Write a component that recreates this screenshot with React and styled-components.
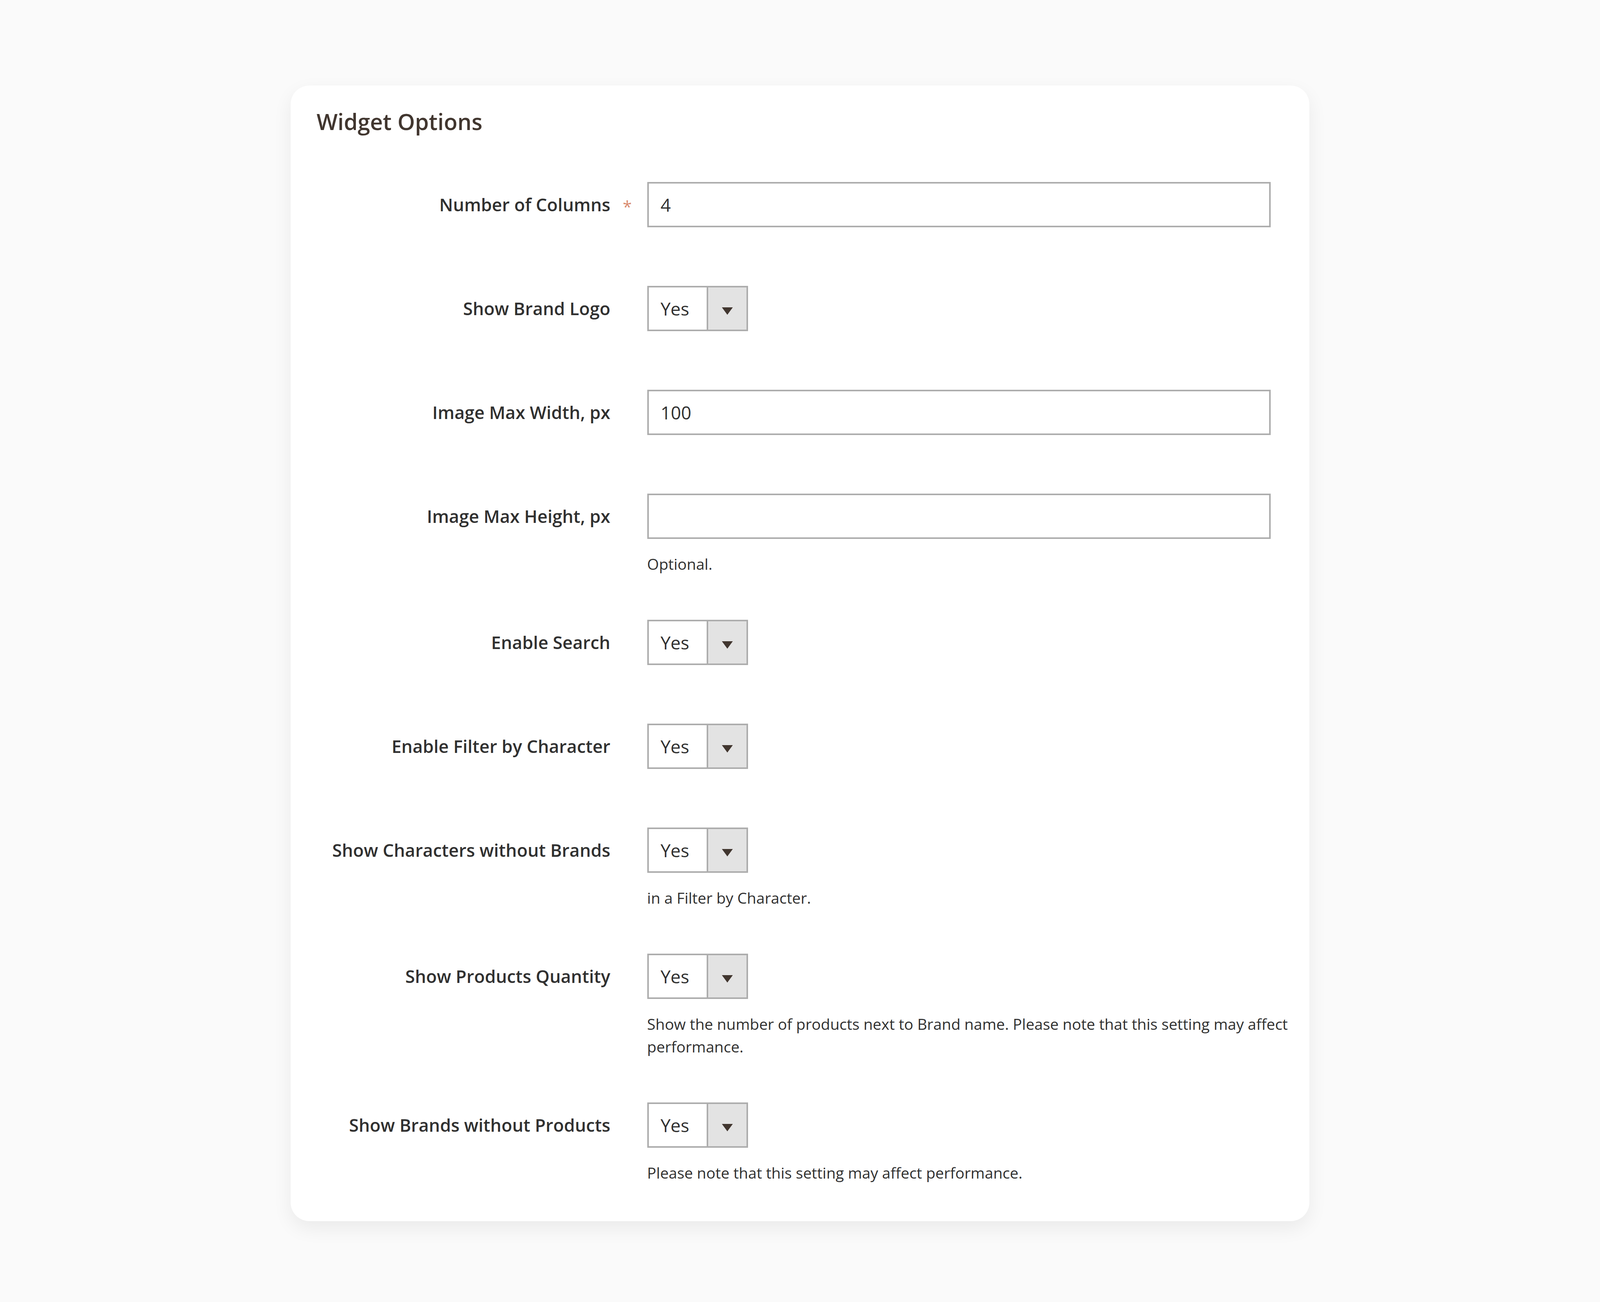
import styled, { createGlobalStyle } from "styled-components";

// horizontal sizes are kept relative to the window width, vertical ones in px
const GlobalStyle = createGlobalStyle`
  html, body {
    margin: 0;
    padding: 0;
    background: #fafafa;
  }
  body {
    font-family: "Open Sans", "Liberation Sans", sans-serif;
    color: #303030;
  }
  * {
    box-sizing: border-box;
  }
`;

const Page = styled("div")`
  min-height: 3334px;
  padding-top: 219px;
`;

const Card = styled("section")`
  width: 63.65vw;
  margin: 0 auto;
  background: #fff;
  border-radius: 48px;
  box-shadow: 0 18px 50px rgba(0, 0, 0, 0.065);
  padding: 57px 2.41vw 95px 1.61vw;
`;

const Title = styled("h2")`
  margin: 0 0 120px;
  font-size: 57px;
  line-height: 70px;
  font-weight: 600;
  color: #41362f;
`;

const Row = styled("div")`
  display: grid;
  grid-template-columns: 18.36vw minmax(0, 1fr);
  column-gap: 2.3vw;
  align-items: start;
  margin-bottom: 114px;

  &:last-child {
    margin-bottom: 0;
  }
`;

const Label = styled("label")`
  display: block;
  text-align: right;
  font-size: 45px;
  line-height: 116px;
  padding-bottom: 36px;
  font-weight: 600;
  white-space: nowrap;
  color: #303030;
`;

const LabelText = styled("span")`
  position: relative;

  &::after {
    content: ${({ $required }) => ($required ? "'*'" : "none")};
    position: absolute;
    left: calc(100% + 0.78vw);
    top: -22px;
    font-size: 42px;
    font-weight: 400;
    color: #d98a6e;
  }
`;

const Control = styled("div")`
  display: flex;
  flex-direction: column;
  align-items: flex-start;
`;

const TextInput = styled("input")`
  width: 100%;
  height: 116px;
  border: 4px solid #adadad;
  background: #fff;
  padding: 0 0.74vw;
  font-family: inherit;
  font-size: 46px;
  color: #303030;
  outline: none;
`;

const Select = styled("div")`
  display: flex;
  width: 6.32vw;
  height: 116px;
  border: 4px solid #adadad;
  background: #fff;
`;

const SelectValue = styled("div")`
  flex: 1;
  padding-left: 0.74vw;
  font-size: 46px;
  line-height: 108px;
  color: #303030;
`;

const SelectButton = styled("div")`
  width: 2.49vw;
  border-left: 4px solid #adadad;
  background: #e3e3e3;
  display: flex;
  align-items: center;
  justify-content: center;
  padding-top: 12px;

  &::before {
    content: "";
    border-style: solid;
    border-width: 19px 14px 0;
    border-color: #41362f transparent transparent;
  }
`;

const Note = styled("div")`
  margin-top: 35px;
  font-size: 39px;
  line-height: 58px;
  white-space: pre;
  color: #303030;
`;

const fields = [
  { label: "Number of Columns", type: "input", value: "4", required: true },
  { label: "Show Brand Logo", type: "select", value: "Yes" },
  { label: "Image Max Width, px", type: "input", value: "100" },
  { label: "Image Max Height, px", type: "input", value: "", note: "Optional." },
  { label: "Enable Search", type: "select", value: "Yes" },
  { label: "Enable Filter by Character", type: "select", value: "Yes" },
  {
    label: "Show Characters without Brands",
    type: "select",
    value: "Yes",
    note: "in a Filter by Character.",
  },
  {
    label: "Show Products Quantity",
    type: "select",
    value: "Yes",
    note: "Show the number of products next to Brand name. Please note that this setting may affect\nperformance.",
  },
  {
    label: "Show Brands without Products",
    type: "select",
    value: "Yes",
    note: "Please note that this setting may affect performance.",
  },
];

const App = () => {
  return (
    <Page>
      <GlobalStyle />
      <Card>
        <Title>Widget Options</Title>
        {fields.map((field) => (
          <Row key={field.label}>
            <Label>
              <LabelText $required={field.required}>{field.label}</LabelText>
            </Label>
            <Control>
              {field.type === "input" ? (
                <TextInput readOnly value={field.value} />
              ) : (
                <Select>
                  <SelectValue>{field.value}</SelectValue>
                  <SelectButton />
                </Select>
              )}
              {field.note ? <Note>{field.note}</Note> : null}
            </Control>
          </Row>
        ))}
      </Card>
    </Page>
  );
};

export default App;
